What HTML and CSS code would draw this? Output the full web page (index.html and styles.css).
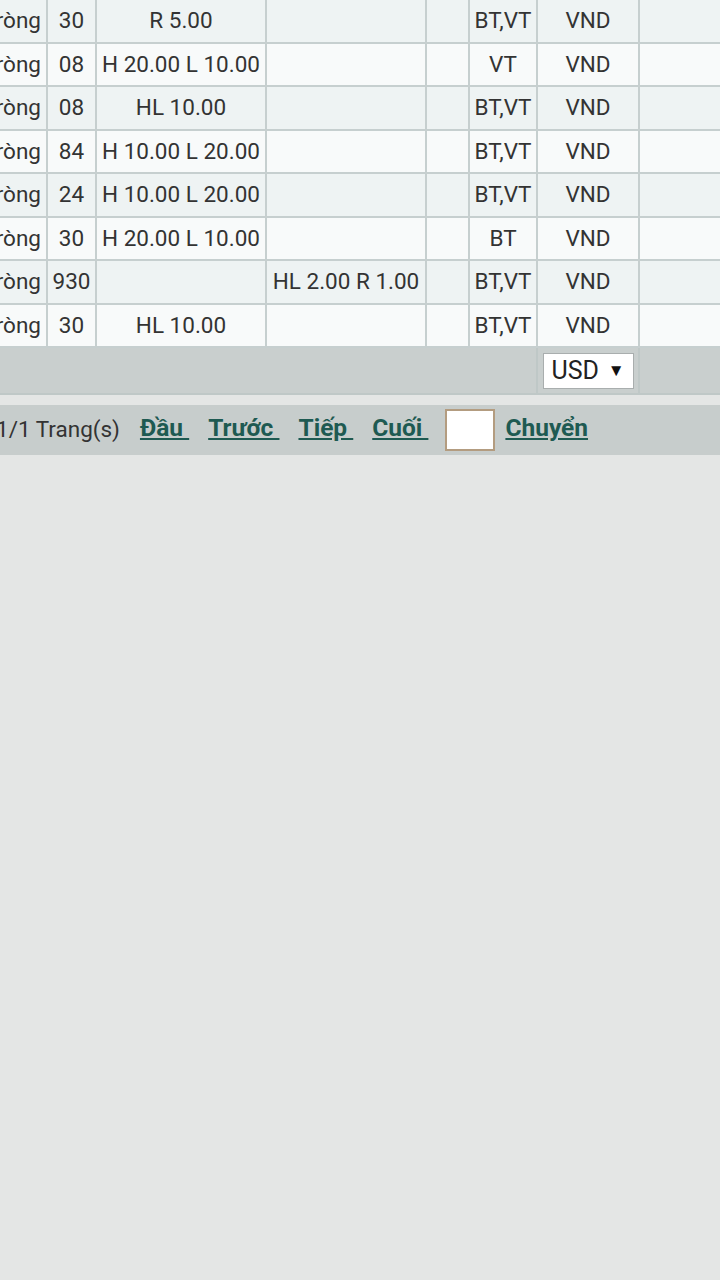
FILE: index.html
```html
<!DOCTYPE html>
<html lang="vi">
<head>
    <meta charset="UTF-8">
    <meta name="viewport" content="width=device-width, initial-scale=1.0">
    <title>Bảng tỷ lệ</title>
    <link rel="stylesheet" href="styles.css">
</head>
<body>
<div class="scroller">
    <table class="odds">
        <colgroup>
            <col class="c-name">
            <col class="c-code">
            <col class="c-rate">
            <col class="c-rate2">
            <col class="c-blank">
            <col class="c-type">
            <col class="c-cur">
            <col class="c-last">
        </colgroup>
        <tbody>
            <tr><td class="name">ròng</td><td>30</td><td>R 5.00</td><td></td><td></td><td>BT,VT</td><td>VND</td><td></td></tr>
            <tr><td class="name">ròng</td><td>08</td><td>H 20.00 L 10.00</td><td></td><td></td><td>VT</td><td>VND</td><td></td></tr>
            <tr><td class="name">ròng</td><td>08</td><td>HL 10.00</td><td></td><td></td><td>BT,VT</td><td>VND</td><td></td></tr>
            <tr><td class="name">ròng</td><td>84</td><td>H 10.00 L 20.00</td><td></td><td></td><td>BT,VT</td><td>VND</td><td></td></tr>
            <tr><td class="name">ròng</td><td>24</td><td>H 10.00 L 20.00</td><td></td><td></td><td>BT,VT</td><td>VND</td><td></td></tr>
            <tr><td class="name">ròng</td><td>30</td><td>H 20.00 L 10.00</td><td></td><td></td><td>BT</td><td>VND</td><td></td></tr>
            <tr><td class="name">ròng</td><td>930</td><td></td><td>HL 2.00 R 1.00</td><td></td><td>BT,VT</td><td>VND</td><td></td></tr>
            <tr><td class="name">ròng</td><td>30</td><td>HL 10.00</td><td></td><td></td><td>BT,VT</td><td>VND</td><td></td></tr>
        </tbody>
        <tfoot>
            <tr>
                <td colspan="6"></td>
                <td>
                    <div class="select">USD <span class="arrow">▼</span></div>
                </td>
                <td></td>
            </tr>
        </tfoot>
    </table>
</div>

<div class="pager">
    <span class="pages">1/1 Trang(s)</span>
    <a href="#">Đầu&nbsp;</a>
    <a href="#">Trước&nbsp;</a>
    <a href="#">Tiếp&nbsp;</a>
    <a href="#">Cuối&nbsp;</a>
    <input type="text" class="goto">
    <a href="#" class="go">Chuyển</a>
</div>
</body>
</html>
```

FILE: styles.css
```css
body {
    font-family: Roboto, 'Liberation Sans', sans-serif;
    margin: 0;
    padding: 0;
    background-color: #e4e6e5;
    color: #333;
}
.scroller {
    overflow: hidden;
    margin-top: -2px;
}
.odds {
    border-collapse: collapse;
    table-layout: fixed;
    width: 812px;
    margin-left: -54px;
    font-size: 22.5px;
}
.c-name { width: 100px; }
.c-code { width: 49px; }
.c-rate { width: 170px; }
.c-rate2 { width: 160px; }
.c-blank { width: 43px; }
.c-type { width: 68px; }
.c-cur { width: 102px; }
.c-last { width: 120px; }
.odds td {
    border: 2px solid #c6cfcf;
    padding: 0;
    height: 41.5px;
    line-height: 41.5px;
    text-align: center;
    white-space: nowrap;
    overflow: hidden;
}
.odds tbody tr:nth-child(odd) td {
    background-color: #eef3f3;
}
.odds tbody tr:nth-child(even) td {
    background-color: #f8fafa;
}
.odds td.name {
    text-align: right;
    padding-right: 5px;
}
.odds tfoot td {
    background-color: #c9cfce;
    border-color: #bfc8c7;
    height: 45px;
    line-height: normal;
}
.select {
    display: inline-flex;
    align-items: center;
    justify-content: space-between;
    box-sizing: border-box;
    width: 91px;
    height: 36px;
    padding: 0 8px 0 8px;
    background-color: #fff;
    border: 1px solid #a9aeae;
    font-size: 25px;
    color: #222;
}
.select .arrow {
    font-size: 17px;
    color: #111;
}
.pager {
    margin-top: 10px;
    height: 50px;
    background-color: #c7cdcc;
    display: flex;
    align-items: center;
    font-size: 22.5px;
    overflow: hidden;
}
.pager .pages {
    margin-left: -4px;
    margin-right: 20px;
    color: #333;
    padding-bottom: 3px;
}
.pager a {
    color: #1e5a52;
    font-weight: bold;
    font-size: 24.5px;
    margin-right: 19px;
    padding-bottom: 5px;
}
.pager input.goto {
    box-sizing: border-box;
    width: 50px;
    height: 42px;
    margin: 0 10px 0 -2px;
    border: 2px solid #b39c80;
    background-color: #fff;
    padding: 0;
}
.pager a.go {
    margin-right: 0;
}
```
